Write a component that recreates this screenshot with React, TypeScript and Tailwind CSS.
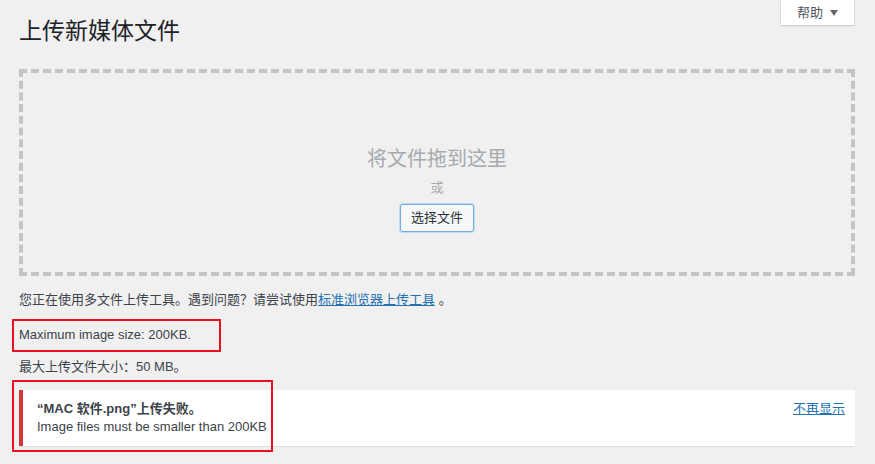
import React from "react";

export default function App() {
  const font = {
    fontFamily:
      '"Liberation Sans", "Noto Sans CJK SC", sans-serif',
  };
  return (
    <div
      className="relative w-[875px] h-[464px] overflow-hidden bg-[#f0f0f1] text-[#3c434a] text-[13px]"
      style={font}
    >
      {/* Help tab */}
      <div className="absolute right-[21px] top-0 w-[73px] h-[25px] bg-white shadow-[0_0_0_1px_rgba(0,0,0,0.04),0_1px_2px_rgba(0,0,0,0.15)] flex items-center justify-center gap-[7px] text-[13px] text-[#50575e]">
        <span>帮助</span>
        <svg width="8" height="6" viewBox="0 0 8 6" className="mt-[1px]">
          <path d="M0 0 H8 L4 6 Z" fill="#646970" />
        </svg>
      </div>

      <div className="pl-[19px] pr-[20px] pt-[17px] flex flex-col">
        <h1 className="text-[23px] leading-[29px] font-normal text-[#1d2327]">上传新媒体文件</h1>

        <div className="mt-[23px] h-[207px] border-4 border-dashed border-[#c3c4c7] flex flex-col items-center pt-[72px]">
          <div className="text-[20px] leading-[28px] text-[#a7aaad]">将文件拖到这里</div>
          <div className="mt-[5px] text-[13px] leading-[20px] text-[#a7aaad]">或</div>
          <button className="mt-[6px] h-[28px] px-[10px] rounded-[3px] border border-[#72aee6] bg-[#f6f7f7] text-[13px] text-[#2c3338] shadow-[0_0_0_1px_rgba(114,174,230,0.35)]">
            选择文件
          </button>
        </div>

        <p className="mt-[14px] leading-[20px]">
          您正在使用多文件上传工具。遇到问题？请尝试使用
          <a className="text-[#2271b1] underline">标准浏览器上传工具</a> 。
        </p>
        <p className="mt-[15px] leading-[20px]">Maximum image size: 200KB.</p>
        <p className="mt-[12px] leading-[20px]">最大上传文件大小：50 MB。</p>

        <div className="mt-[13px] h-[56px] bg-white border-l-4 border-[#d63638] shadow-[0_1px_1px_rgba(0,0,0,0.06)] flex justify-between pl-[14px] pr-[10px] pt-[10px]">
          <div className="flex flex-col">
            <span className="font-bold leading-[18px] text-[#3c434a]">“MAC 软件.png”上传失败。</span>
            <span className="leading-[18px]">Image files must be smaller than 200KB</span>
          </div>
          <a className="text-[#2271b1] underline leading-[18px]">不再显示</a>
        </div>
      </div>

      {/* Red annotation boxes */}
      <div className="absolute left-[12px] top-[319px] w-[209px] h-[33px] border-2 border-[#e81123]" />
      <div className="absolute left-[12px] top-[380px] w-[261px] h-[72px] border-2 border-[#e81123]" />
    </div>
  );
}
